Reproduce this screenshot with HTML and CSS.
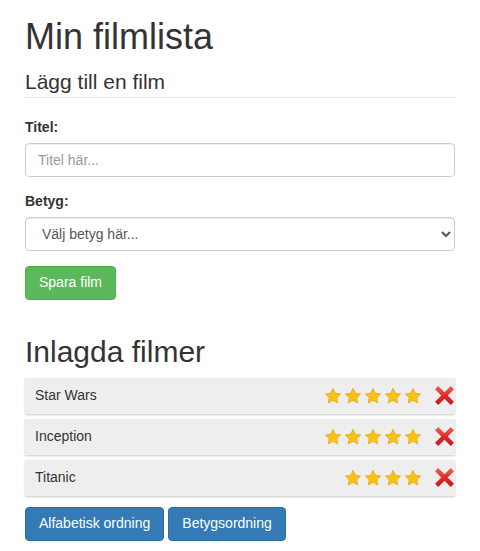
FILE: index.html
```html
<!DOCTYPE html>
<html lang="sv">
<head>
<meta charset="utf-8">
<title>Min filmlista</title>
<link rel="stylesheet" href="styles.css">
</head>
<body>
<div class="container">
  <h1 class="title">Min filmlista</h1>
  <form class="form">
    <fieldset class="fieldset">
      <legend class="legend">Lägg till en film</legend>
      <div class="form-group">
        <label class="label" for="titel">Titel:</label>
        <input class="control" id="titel" type="text" placeholder="Titel här...">
      </div>
      <div class="form-group">
        <label class="label" for="betyg">Betyg:</label>
        <select class="control select" id="betyg">
          <option>Välj betyg här...</option>
        </select>
      </div>
      <button type="button" class="btn btn-success">Spara film</button>
    </fieldset>
  </form>

  <h2 class="subtitle">Inlagda filmer</h2>
  <ul class="list">
    <li class="item">
      <span class="name">Star Wars</span>
      <span class="rating">
        <svg class="star" viewBox="0 0 24 24"><path d="M12 1.8l3.1 6.6 7.1.9-5.2 4.9 1.4 7.1L12 17.8l-6.4 3.5 1.4-7.1-5.2-4.9 7.1-.9z"/></svg>
        <svg class="star" viewBox="0 0 24 24"><path d="M12 1.8l3.1 6.6 7.1.9-5.2 4.9 1.4 7.1L12 17.8l-6.4 3.5 1.4-7.1-5.2-4.9 7.1-.9z"/></svg>
        <svg class="star" viewBox="0 0 24 24"><path d="M12 1.8l3.1 6.6 7.1.9-5.2 4.9 1.4 7.1L12 17.8l-6.4 3.5 1.4-7.1-5.2-4.9 7.1-.9z"/></svg>
        <svg class="star" viewBox="0 0 24 24"><path d="M12 1.8l3.1 6.6 7.1.9-5.2 4.9 1.4 7.1L12 17.8l-6.4 3.5 1.4-7.1-5.2-4.9 7.1-.9z"/></svg>
        <svg class="star" viewBox="0 0 24 24"><path d="M12 1.8l3.1 6.6 7.1.9-5.2 4.9 1.4 7.1L12 17.8l-6.4 3.5 1.4-7.1-5.2-4.9 7.1-.9z"/></svg>
      </span>
      <svg class="delete" viewBox="0 0 20 20"><defs><linearGradient id="xg" x1="0" y1="0" x2="0" y2="1"><stop offset="0" stop-color="#f0605f"/><stop offset="0.5" stop-color="#e02a2a"/><stop offset="1" stop-color="#c8161b"/></linearGradient></defs><path fill="url(#xg)" d="M4 1l6 6 6-6 3 3-6 6 6 6-3 3-6-6-6 6-3-3 6-6-6-6z"/></svg>
    </li>
    <li class="item">
      <span class="name">Inception</span>
      <span class="rating">
        <svg class="star" viewBox="0 0 24 24"><path d="M12 1.8l3.1 6.6 7.1.9-5.2 4.9 1.4 7.1L12 17.8l-6.4 3.5 1.4-7.1-5.2-4.9 7.1-.9z"/></svg>
        <svg class="star" viewBox="0 0 24 24"><path d="M12 1.8l3.1 6.6 7.1.9-5.2 4.9 1.4 7.1L12 17.8l-6.4 3.5 1.4-7.1-5.2-4.9 7.1-.9z"/></svg>
        <svg class="star" viewBox="0 0 24 24"><path d="M12 1.8l3.1 6.6 7.1.9-5.2 4.9 1.4 7.1L12 17.8l-6.4 3.5 1.4-7.1-5.2-4.9 7.1-.9z"/></svg>
        <svg class="star" viewBox="0 0 24 24"><path d="M12 1.8l3.1 6.6 7.1.9-5.2 4.9 1.4 7.1L12 17.8l-6.4 3.5 1.4-7.1-5.2-4.9 7.1-.9z"/></svg>
        <svg class="star" viewBox="0 0 24 24"><path d="M12 1.8l3.1 6.6 7.1.9-5.2 4.9 1.4 7.1L12 17.8l-6.4 3.5 1.4-7.1-5.2-4.9 7.1-.9z"/></svg>
      </span>
      <svg class="delete" viewBox="0 0 20 20"><path fill="url(#xg)" d="M4 1l6 6 6-6 3 3-6 6 6 6-3 3-6-6-6 6-3-3 6-6-6-6z"/></svg>
    </li>
    <li class="item">
      <span class="name">Titanic</span>
      <span class="rating">
        <svg class="star" viewBox="0 0 24 24"><path d="M12 1.8l3.1 6.6 7.1.9-5.2 4.9 1.4 7.1L12 17.8l-6.4 3.5 1.4-7.1-5.2-4.9 7.1-.9z"/></svg>
        <svg class="star" viewBox="0 0 24 24"><path d="M12 1.8l3.1 6.6 7.1.9-5.2 4.9 1.4 7.1L12 17.8l-6.4 3.5 1.4-7.1-5.2-4.9 7.1-.9z"/></svg>
        <svg class="star" viewBox="0 0 24 24"><path d="M12 1.8l3.1 6.6 7.1.9-5.2 4.9 1.4 7.1L12 17.8l-6.4 3.5 1.4-7.1-5.2-4.9 7.1-.9z"/></svg>
        <svg class="star" viewBox="0 0 24 24"><path d="M12 1.8l3.1 6.6 7.1.9-5.2 4.9 1.4 7.1L12 17.8l-6.4 3.5 1.4-7.1-5.2-4.9 7.1-.9z"/></svg>
      </span>
      <svg class="delete" viewBox="0 0 20 20"><path fill="url(#xg)" d="M4 1l6 6 6-6 3 3-6 6 6 6-3 3-6-6-6 6-3-3 6-6-6-6z"/></svg>
    </li>
  </ul>
  <div class="sort">
    <button type="button" class="btn btn-primary">Alfabetisk ordning</button>
    <button type="button" class="btn btn-primary">Betygsordning</button>
  </div>
</div>
</body>
</html>
```
FILE: styles.css
```css
* { box-sizing: border-box; }
html, body { margin: 0; padding: 0; background: #fff; }
body {
  font-family: "Liberation Sans", Arial, Helvetica, sans-serif;
  font-size: 14px;
  line-height: 1.42857;
  color: #333;
}
.container { padding: 0 25px; }
.title {
  font-size: 36px;
  font-weight: 500;
  line-height: 1.1;
  margin: 17px 0 10px;
}
.form { margin: 0; }
.fieldset { border: 0; margin: 0; padding: 0; min-width: 0; }
.legend {
  display: block;
  width: 100%;
  padding: 0;
  margin: 0 0 20px;
  font-size: 21px;
  line-height: 30px;
  color: #333;
  border-bottom: 1px solid #e5e5e5;
}
.form-group { margin-bottom: 15px; }
.label {
  display: block;
  font-weight: bold;
  margin-bottom: 5px;
}
.control {
  display: block;
  width: 100%;
  height: 34px;
  padding: 6px 12px;
  font-family: inherit;
  font-size: 14px;
  line-height: 1.42857;
  color: #555;
  background: #fff;
  border: 1px solid #ccc;
  border-radius: 4px;
  box-shadow: inset 0 1px 1px rgba(0,0,0,.075);
  margin: 0;
}
.control::placeholder { color: #999; }
.btn {
  display: inline-block;
  height: 34px;
  padding: 6px 13px;
  font-family: inherit;
  font-size: 14px;
  line-height: 1.42857;
  color: #fff;
  border: 1px solid transparent;
  border-radius: 4px;
  margin: 0;
  cursor: pointer;
}
.btn-success { background: #5cb85c; border-color: #4cae4c; }
.btn-primary { background: #337ab7; border-color: #2e6da4; }
.subtitle {
  font-size: 30px;
  font-weight: 500;
  line-height: 1.1;
  margin: 35px 0 10px;
}
.list {
  list-style: none;
  margin: 0;
  padding: 0;
  display: flex;
  flex-direction: column;
  gap: 5px;
}
.item {
  display: flex;
  align-items: center;
  height: 36px;
  padding: 0 0 0 10px;
  background: #eee;
  box-shadow: 0 1px 2px rgba(0,0,0,.22);
}
.name { flex: 1; }
.rating { display: flex; gap: 2px; margin-right: 12px; }
.star { width: 18px; height: 18px; display: block; }
.star path { fill: #f7c313; stroke: #e8a317; stroke-width: 1; stroke-linejoin: round; }
.delete { width: 21px; height: 21px; display: block; }
.sort { margin-top: 11px; display: flex; gap: 4px; }
```
